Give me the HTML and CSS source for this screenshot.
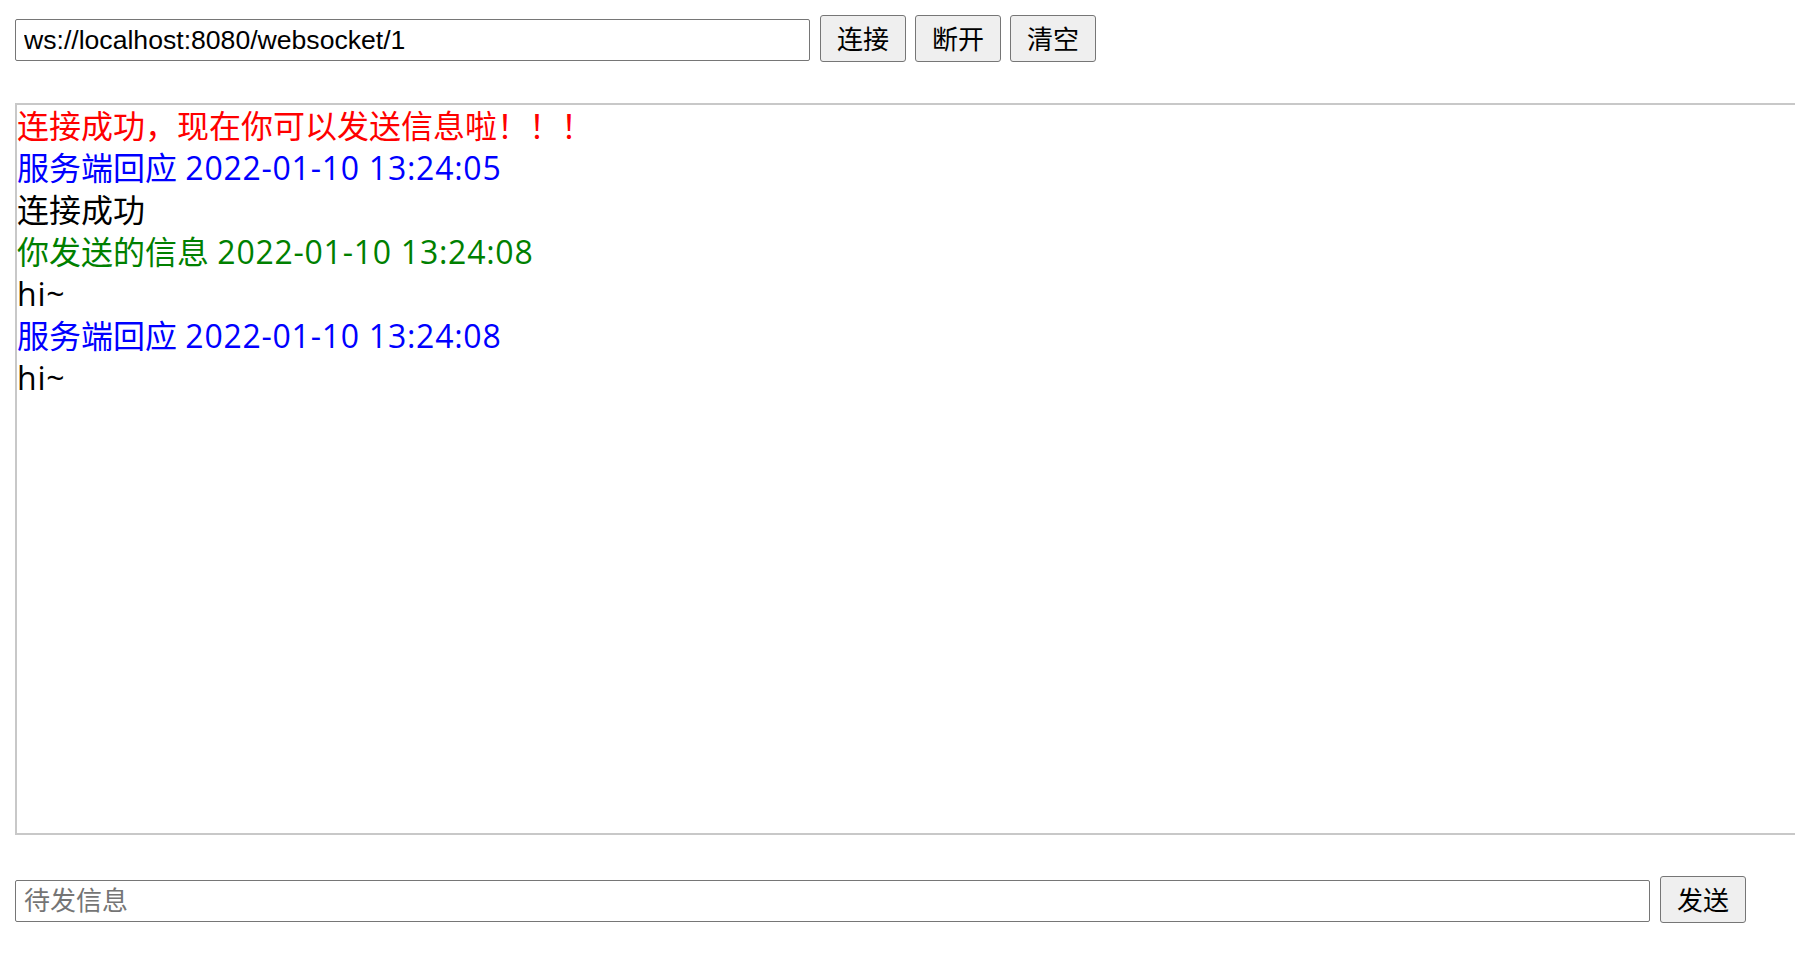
FILE: index.html
```html
<!DOCTYPE html>
<html lang="zh-CN">
<head>
<meta charset="utf-8">
<title>WebSocket</title>
<link rel="stylesheet" href="styles.css">
</head>
<body>
<div class="page">
  <div class="toolbar">
    <input class="url-input" type="text" value="ws://localhost:8080/websocket/1">
    <button class="btn">连接</button>
    <button class="btn">断开</button>
    <button class="btn">清空</button>
  </div>
  <div class="messages">
    <div class="msg msg-red">连接成功，现在你可以发送信息啦！！！</div>
    <div class="msg msg-blue">服务端回应 <span class="latin">2022-01-10 13:24:05</span></div>
    <div class="msg">连接成功</div>
    <div class="msg msg-green">你发送的信息 <span class="latin">2022-01-10 13:24:08</span></div>
    <div class="msg"><span class="latin">hi~</span></div>
    <div class="msg msg-blue">服务端回应 <span class="latin">2022-01-10 13:24:08</span></div>
    <div class="msg"><span class="latin">hi~</span></div>
  </div>
  <div class="sendbar">
    <input class="send-input" type="text" placeholder="待发信息">
    <button class="btn">发送</button>
  </div>
</div>
</body>
</html>
```

FILE: styles.css
```css
html, body {
  margin: 0;
  padding: 0;
  background: #ffffff;
  overflow: hidden;
}

.page {
  padding: 15px 0 0 15px;
  font-family: "Noto Sans CJK SC", "Noto Sans", sans-serif;
}

.toolbar {
  display: flex;
  align-items: flex-end;
  height: 47px;
}

.url-input,
.send-input {
  box-sizing: border-box;
  height: 42px;
  margin: 0 0 1px 0;
  padding: 0 8px;
  border: 1px solid #767676;
  border-radius: 2px;
  font-family: "Liberation Sans", "Noto Sans CJK SC", sans-serif;
  font-size: 26.6px;
  color: #000000;
  background: #ffffff;
  outline: none;
}

.url-input {
  width: 795px;
}

.send-input {
  width: 1635px;
  padding-bottom: 5px;
  font-size: 26px;
  font-family: "Noto Sans CJK SC", "Liberation Sans", sans-serif;
}

.send-input::placeholder {
  color: #757575;
}

.btn {
  box-sizing: border-box;
  height: 47px;
  width: 86px;
  margin-left: 9px;
  padding: 0 0 2px 0;
  border: 1px solid #767676;
  border-radius: 3px;
  background: #efefef;
  color: #000000;
  font-family: "Noto Sans CJK SC", sans-serif;
  font-size: 26px;
  line-height: 1;
}

.url-input + .btn,
.send-input + .btn {
  margin-left: 10px;
}

.messages {
  box-sizing: border-box;
  margin-top: 41px;
  height: 732px;
  border: 2px solid #c8c8c8;
  border-right: none;
  font-family: "Open Sans", "Noto Sans CJK SC", sans-serif;
  font-size: 32px;
  line-height: 42px;
  color: #000000;
}

.msg {
  white-space: nowrap;
}

.latin {
  letter-spacing: 0.75px;
}

.msg-red { color: #ff0000; }
.msg-blue { color: #0000ff; }
.msg-green { color: #008000; }

.sendbar {
  display: flex;
  align-items: flex-end;
  margin-top: 41px;
  height: 47px;
}
```
